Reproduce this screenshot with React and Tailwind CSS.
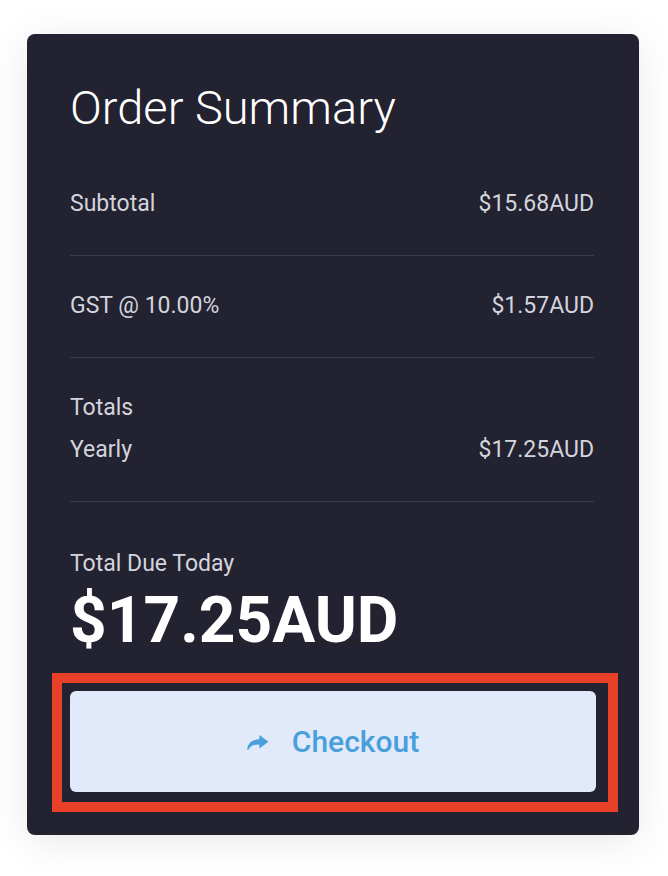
import React from "react";

function ShareIcon() {
  return (
    <svg width="22" height="16" viewBox="0 0 22 16" aria-hidden="true">
      <path
        d="M12.3 1 L21.5 7.8 L12.3 14.4 L12.3 10.4 C7.4 10.3 3.8 11.6 1.3 15.7 C0.7 16 0.1 15.7 0.2 15 C1 8.8 5.2 5.6 12.3 5.2 Z"
        fill="#4a9fdb"
      />
    </svg>
  );
}

function Row({ label, value }) {
  return (
    <div className="flex items-center justify-between text-[23px] leading-[34px] text-[#d4d4dc]">
      <span>{label}</span>
      <span>{value}</span>
    </div>
  );
}

export default function App() {
  return (
    <div className="min-h-[876px] bg-white pt-[34px] pl-[27px] font-['Roboto',sans-serif]">
      <div className="w-[612px] rounded-[8px] bg-[#222231] pl-[43px] pr-[45px] pt-[46px] pb-[43px] shadow-[0_6px_40px_rgba(0,0,0,0.09)]">
        <h1 className="text-[47px] leading-[55px] font-light text-white">Order Summary</h1>

        <div className="mt-[52px] pb-[34px] border-b border-[#3b3b4b]">
          <Row label="Subtotal" value="$15.68AUD" />
        </div>

        <div className="pt-[33px] pb-[34px] border-b border-[#3b3b4b]">
          <Row label="GST @ 10.00%" value="$1.57AUD" />
        </div>

        <div className="pt-[33px] pb-[34px] border-b border-[#3b3b4b] flex flex-col gap-[8px]">
          <div className="text-[23px] leading-[34px] text-[#d4d4dc]">Totals</div>
          <Row label="Yearly" value="$17.25AUD" />
        </div>

        <div className="pt-[48px]">
          <div className="text-[23px] leading-[28px] text-[#d4d4dc]">Total Due Today</div>
          <div className="mt-[7px] text-[64px] leading-[72px] font-bold text-white">$17.25AUD</div>
        </div>

        <button className="relative mt-[34px] flex h-[101px] w-[calc(100%+2px)] items-center justify-center gap-[23px] rounded-[6px] bg-[#e0eafb] text-[30px] font-medium text-[#4a9fdb]">
          <ShareIcon />
          <span>Checkout</span>
          <span className="pointer-events-none absolute top-[-18px] left-[-18px] right-[-22px] bottom-[-20px] border-[10px] border-[#e9402a]" />
        </button>
      </div>
    </div>
  );
}
